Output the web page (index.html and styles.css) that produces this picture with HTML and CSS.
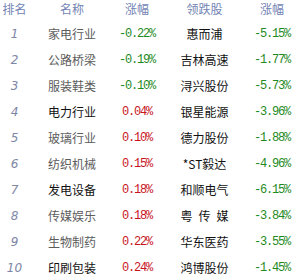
FILE: index.html
```html
<!DOCTYPE html>
<html lang="zh">
<head>
<meta charset="utf-8">
<link rel="stylesheet" href="styles.css">
</head>
<body>
<div class="board">
  <div class="row head">
    <span>排名</span><span>名称</span><span>涨幅</span><span>领跌股</span><span>涨幅</span>
  </div>
  <div class="row"><span class="rank">1</span><span class="name">家电行业</span><span class="num down">-0.22%</span><span class="lead">惠而浦</span><span class="num down">-5.15%</span></div>
  <div class="row"><span class="rank">2</span><span class="name">公路桥梁</span><span class="num down">-0.19%</span><span class="lead">吉林高速</span><span class="num down">-1.77%</span></div>
  <div class="row"><span class="rank">3</span><span class="name">服装鞋类</span><span class="num down">-0.10%</span><span class="lead">浔兴股份</span><span class="num down">-5.73%</span></div>
  <div class="row"><span class="rank">4</span><span class="name dark">电力行业</span><span class="num up">0.04%</span><span class="lead">银星能源</span><span class="num down">-3.96%</span></div>
  <div class="row"><span class="rank">5</span><span class="name">玻璃行业</span><span class="num up">0.10%</span><span class="lead">德力股份</span><span class="num down">-1.88%</span></div>
  <div class="row"><span class="rank">6</span><span class="name">纺织机械</span><span class="num up">0.15%</span><span class="lead">*ST毅达</span><span class="num down">-4.96%</span></div>
  <div class="row"><span class="rank">7</span><span class="name dark">发电设备</span><span class="num up">0.18%</span><span class="lead">和顺电气</span><span class="num down">-6.15%</span></div>
  <div class="row"><span class="rank">8</span><span class="name">传媒娱乐</span><span class="num up">0.18%</span><span class="lead spaced">粤传媒</span><span class="num down">-3.84%</span></div>
  <div class="row"><span class="rank">9</span><span class="name">生物制药</span><span class="num up">0.22%</span><span class="lead">华东医药</span><span class="num down">-3.55%</span></div>
  <div class="row"><span class="rank">10</span><span class="name dark">印刷包装</span><span class="num up">0.24%</span><span class="lead">鸿博股份</span><span class="num down">-1.45%</span></div>
</div>
</body>
</html>
```
FILE: styles.css
```css
html, body {
  margin: 0;
  padding: 0;
  background: #ffffff;
}
body {
  font-family: "Noto Sans CJK SC", "Liberation Sans", sans-serif;
  font-size: 12px;
  width: 295px;
  height: 277px;
  overflow: hidden;
}
.board {
  display: flex;
  flex-direction: column;
}
.row {
  display: grid;
  grid-template-columns: 29px 86px 44px 91px 44px;
  height: 26px;
  align-items: center;
  justify-items: center;
  line-height: 14px;
}
.row.head {
  height: 21px;
  align-items: start;
  padding-top: 2px;
  box-sizing: border-box;
  color: #7384b4;
  height: 21px;
}
.head span {
  line-height: 14px;
}
.rank {
  font-family: "DejaVu Sans", sans-serif;
  font-style: italic;
  font-size: 12px;
  color: #7d86a6;
}
.name {
  color: #5c5c5c;
}
.name.dark {
  color: #111111;
}
.lead {
  color: #111111;
}
.lead.spaced {
  letter-spacing: 6px;
  margin-right: -6px;
}
.num {
  font-family: "Liberation Mono", monospace;
  font-size: 12px;
  letter-spacing: -1.2px;
}
.down {
  color: #1e8a1e;
}
.up {
  color: #c8141e;
}
```
